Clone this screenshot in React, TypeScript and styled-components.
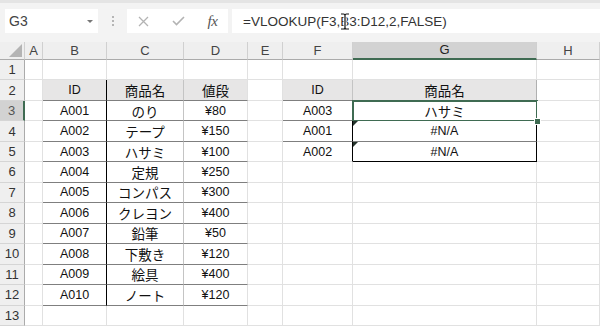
import React from 'react';
import styled, { createGlobalStyle } from 'styled-components';

const GlobalStyle = createGlobalStyle`
  html, body {
    margin: 0;
    padding: 0;
    background: #fff;
  }
  body {
    font-family: "Liberation Sans", "Noto Sans CJK JP", sans-serif;
    overflow: hidden;
  }
`;

const GRID = '#e1e1e1';
const RULE = '#7f7f7f';
const SELECT = '#3f6b52';

const Window = styled.div`
  width: 600px;
  height: 326px;
  overflow: hidden;
  background: #fff;
  display: flex;
  flex-direction: column;
`;

const FormulaBar = styled.div`
  height: 43px;
  box-sizing: border-box;
  background: #f3f3f3;
  border-top: 3px solid #e4e4e4;
  padding: 6px 0 0 5px;
  display: flex;
  align-items: flex-start;
`;

const NameBox = styled.div`
  width: 93px;
  height: 24px;
  box-sizing: border-box;
  background: #fff;
  padding: 0 5px 0 4px;
  display: flex;
  align-items: center;
  justify-content: space-between;
  font-size: 14px;
  color: #444;
`;

const DropArrow = styled.span`
  width: 0;
  height: 0;
  border-left: 3px solid transparent;
  border-right: 3px solid transparent;
  border-top: 3px solid #777;
`;

const Grip = styled.div`
  width: 29px;
  height: 24px;
  display: flex;
  flex-direction: column;
  align-items: center;
  justify-content: center;
  gap: 2px;
  span {
    width: 2px;
    height: 2px;
    background: #b5b5b5;
  }
`;

const FxBox = styled.div`
  width: 101px;
  height: 24px;
  background: #fff;
  display: grid;
  grid-template-columns: 32px 38px 31px;
  align-items: center;
  justify-items: center;
`;

const FxLabel = styled.span`
  font-family: "Liberation Serif", serif;
  font-style: italic;
  font-size: 15px;
  color: #555;
  letter-spacing: -0.5px;
`;

const FormulaInput = styled.div`
  flex: 1;
  height: 24px;
  margin-left: 4px;
  background: #fff;
  padding-left: 11px;
  display: flex;
  align-items: center;
  font-size: 13.5px;
  color: #333;
  position: relative;
`;

const Cursor = styled.svg`
  position: absolute;
  left: 108px;
  top: 4px;
`;

const Sheet = styled.div`
  flex: 1;
  display: grid;
  grid-template-columns: 25px 18px 64px 77px 64px 35px 70px 184px 1fr;
  grid-template-rows: 18px repeat(13, 20.47px);
`;

const Corner = styled.div`
  background: #efefef;
  box-sizing: border-box;
  border-right: 1px solid #d0d0d0;
  border-bottom: 1px solid #ababab;
  position: relative;
  &::after {
    content: '';
    position: absolute;
    right: 2px;
    bottom: 2px;
    width: 0;
    height: 0;
    border-left: 13px solid transparent;
    border-bottom: 13px solid #b4b4b4;
  }
`;

const ColHead = styled.div<{ $on?: boolean }>`
  background: ${p => (p.$on ? '#d2d2d2' : '#efefef')};
  box-sizing: border-box;
  border-right: 1px solid #d0d0d0;
  border-bottom: ${p => (p.$on ? `2px solid ${SELECT}` : '1px solid #ababab')};
  display: flex;
  align-items: center;
  justify-content: center;
  font-size: 13px;
  color: ${p => (p.$on ? '#222' : '#444')};
`;

const RowHead = styled.div<{ $on?: boolean }>`
  background: ${p => (p.$on ? '#d2d2d2' : '#efefef')};
  box-sizing: border-box;
  border-bottom: 1px solid #d5d5d5;
  border-right: ${p => (p.$on ? `2px solid ${SELECT}` : '1px solid #ababab')};
  display: flex;
  align-items: center;
  justify-content: center;
  font-size: 13px;
  color: ${p => (p.$on ? '#555' : '#333')};
`;

const Cell = styled.div<{
  $bg?: string;
  $bottom?: string;
  $right?: string;
  $selected?: boolean;
  $error?: boolean;
}>`
  background: ${p => p.$bg || '#fff'};
  box-sizing: border-box;
  border-right: 1px solid ${p => p.$right || GRID};
  border-bottom: 1px solid ${p => p.$bottom || GRID};
  display: flex;
  align-items: center;
  justify-content: center;
  font-size: 12.5px;
  color: #111;
  position: relative;
  white-space: nowrap;

  ${p =>
    p.$error &&
    `
    &::before {
      content: '';
      position: absolute;
      left: 0;
      top: 0;
      width: 0;
      height: 0;
      border-top: 5px solid #24332b;
      border-right: 5px solid transparent;
    }
  `}

  ${p =>
    p.$selected &&
    `
    &::after {
      content: '';
      position: absolute;
      left: -1px;
      top: -1px;
      right: -2px;
      bottom: -2px;
      border: 2px solid ${SELECT};
      pointer-events: none;
    }
  `}
`;

const FillHandle = styled.span`
  position: absolute;
  right: -4px;
  bottom: -4px;
  width: 5px;
  height: 5px;
  background: ${SELECT};
  outline: 1px solid #fff;
  z-index: 2;
`;

const Jp = styled.span`
  font-size: 13.5px;
`;

const columns = ['A', 'B', 'C', 'D', 'E', 'F', 'G', 'H'];

const products: [string, string, string][] = [
  ['A001', 'のり', '¥80'],
  ['A002', 'テープ', '¥150'],
  ['A003', 'ハサミ', '¥100'],
  ['A004', '定規', '¥250'],
  ['A005', 'コンパス', '¥300'],
  ['A006', 'クレヨン', '¥400'],
  ['A007', '鉛筆', '¥50'],
  ['A008', '下敷き', '¥120'],
  ['A009', '絵具', '¥400'],
  ['A010', 'ノート', '¥120'],
];

const lookup: [string, string][] = [
  ['A003', 'ハサミ'],
  ['A001', '#N/A'],
  ['A002', '#N/A'],
];

type Spec = {
  text?: string;
  bg?: string;
  bottom?: string;
  right?: string;
  selected?: boolean;
  error?: boolean;
};

const HEAD_BG = '#e7e6e6';

function cellSpec(row: number, col: number): Spec {
  // left table B2:D12
  if (row >= 2 && row <= 12 && col >= 1 && col <= 3) {
    const text = row === 2 ? ['ID', '商品名', '値段'][col - 1] : products[row - 3][col - 1];
    return {
      text,
      bg: row === 2 ? HEAD_BG : undefined,
      bottom: RULE,
      right: col === 1 ? '#000' : col === 2 ? '#c4c4c4' : undefined,
    };
  }
  // lookup table F2:G5
  if (row >= 2 && row <= 5 && col === 5) {
    return {
      text: row === 2 ? 'ID' : lookup[row - 3][0],
      bg: row === 2 ? HEAD_BG : undefined,
      bottom: row < 5 ? RULE : undefined,
      right: row >= 4 ? '#000' : '#c4c4c4',
    };
  }
  if (row >= 2 && row <= 5 && col === 6) {
    return {
      text: row === 2 ? '商品名' : lookup[row - 3][1],
      bg: row === 2 ? HEAD_BG : undefined,
      bottom: row === 5 ? '#000' : RULE,
      right: row >= 4 ? '#000' : '#b0b0b0',
      selected: row === 3,
      error: row >= 4,
    };
  }
  return {};
}

const isJp = (s: string) => /[^\x00-\x7F¥]/.test(s);

export default function App() {
  const rows = Array.from({ length: 13 }, (_, i) => i + 1);
  return (
    <Window>
      <GlobalStyle />
      <FormulaBar>
        <NameBox>
          G3
          <DropArrow />
        </NameBox>
        <Grip>
          <span />
          <span />
          <span />
        </Grip>
        <FxBox>
          <svg width="11" height="11" viewBox="0 0 11 11">
            <path d="M1 1 L10 10 M10 1 L1 10" stroke="#b3b3b3" strokeWidth="1.3" fill="none" />
          </svg>
          <svg width="13" height="10" viewBox="0 0 13 10">
            <path d="M1 5 L4.5 8.5 L12 1" stroke="#b3b3b3" strokeWidth="1.6" fill="none" />
          </svg>
          <FxLabel>fx</FxLabel>
        </FxBox>
        <FormulaInput>
          =VLOOKUP(F3,B3:D12,2,FALSE)
          <Cursor width="10" height="17" viewBox="0 0 10 17">
            <path
              d="M1 1 H3.5 Q5 1 5 2.5 Q5 1 6.5 1 H9 M5 2.5 V14.5 M1 16 H3.5 Q5 16 5 14.5 Q5 16 6.5 16 H9"
              stroke="#fff"
              strokeWidth="3"
              fill="none"
            />
            <path
              d="M1 1 H3.5 Q5 1 5 2.5 Q5 1 6.5 1 H9 M5 2.5 V14.5 M1 16 H3.5 Q5 16 5 14.5 Q5 16 6.5 16 H9"
              stroke="#111"
              strokeWidth="1.2"
              fill="none"
            />
          </Cursor>
        </FormulaInput>
      </FormulaBar>

      <Sheet>
        <Corner />
        {columns.map(c => (
          <ColHead key={c} $on={c === 'G'}>
            {c}
          </ColHead>
        ))}
        {rows.map(r => (
          <React.Fragment key={r}>
            <RowHead $on={r === 3}>{r}</RowHead>
            {columns.map((c, ci) => {
              const s = cellSpec(r, ci);
              return (
                <Cell
                  key={c}
                  $bg={s.bg}
                  $bottom={s.bottom}
                  $right={s.right}
                  $selected={s.selected}
                  $error={s.error}
                >
                  {s.text && (isJp(s.text) ? <Jp>{s.text}</Jp> : s.text)}
                  {s.selected && <FillHandle />}
                </Cell>
              );
            })}
          </React.Fragment>
        ))}
      </Sheet>
    </Window>
  );
}
